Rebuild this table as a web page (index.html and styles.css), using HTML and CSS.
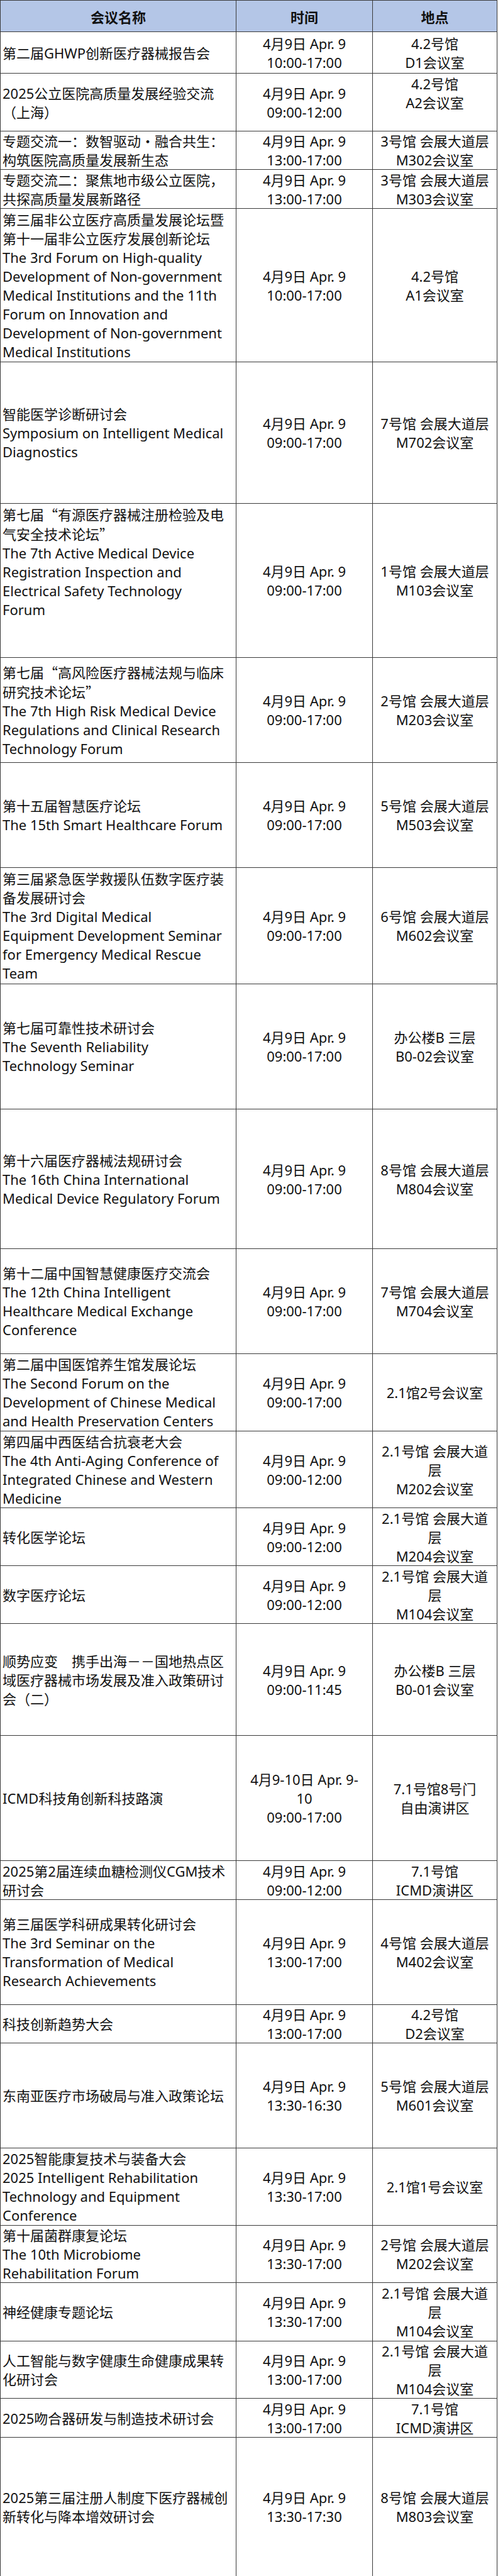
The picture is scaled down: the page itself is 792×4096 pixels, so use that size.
FILE: index.html
```html
<!DOCTYPE html>
<html lang="zh-CN">
<head>
<meta charset="utf-8">
<title>会议日程</title>
<link rel="stylesheet" href="styles.css">
</head>
<body>
<table class="schedule">
  <colgroup>
    <col class="c-name">
    <col class="c-time">
    <col class="c-place">
  </colgroup>
  <thead>
    <tr style="height:50px"><th>会议名称</th><th>时间</th><th>地点</th></tr>
  </thead>
  <tbody>
    <tr style="height:66px">
      <td class="name">第二届GHWP创新医疗器械报告会</td>
      <td class="time">4月9日 Apr. 9<br>10:00-17:00</td>
      <td class="place">4.2号馆<br>D1会议室</td>
    </tr>
    <tr style="height:92px">
      <td class="name">2025公立医院高质量发展经验交流<br>（上海）</td>
      <td class="time">4月9日 Apr. 9<br>09:00-12:00</td>
      <td class="place">4.2号馆<br>A2会议室<br>&nbsp;</td>
    </tr>
    <tr style="height:61px">
      <td class="name">专题交流一：数智驱动・融合共生：<br>构筑医院高质量发展新生态</td>
      <td class="time">4月9日 Apr. 9<br>13:00-17:00</td>
      <td class="place">3号馆 会展大道层<br>M302会议室</td>
    </tr>
    <tr style="height:62px">
      <td class="name">专题交流二：聚焦地市级公立医院，<br>共探高质量发展新路径</td>
      <td class="time">4月9日 Apr. 9<br>13:00-17:00</td>
      <td class="place">3号馆 会展大道层<br>M303会议室</td>
    </tr>
    <tr style="height:244px">
      <td class="name">第三届非公立医疗高质量发展论坛暨<br>第十一届非公立医疗发展创新论坛<br>The 3rd Forum on High-quality<br>Development of Non-government<br>Medical Institutions and the 11th<br>Forum on Innovation and<br>Development of Non-government<br>Medical Institutions</td>
      <td class="time">4月9日 Apr. 9<br>10:00-17:00</td>
      <td class="place">4.2号馆<br>A1会议室</td>
    </tr>
    <tr style="height:225px">
      <td class="name">智能医学诊断研讨会<br>Symposium on Intelligent Medical<br>Diagnostics</td>
      <td class="time">4月9日 Apr. 9<br>09:00-17:00</td>
      <td class="place">7号馆 会展大道层<br>M702会议室</td>
    </tr>
    <tr style="height:245px">
      <td class="name">第七届<span class="q">“</span>有源医疗器械注册检验及电<br>气安全技术论坛<span class="q">”</span><br>The 7th Active Medical Device<br>Registration Inspection and<br>Electrical Safety Technology<br>Forum<br>&nbsp;<br>&nbsp;</td>
      <td class="time">4月9日 Apr. 9<br>09:00-17:00</td>
      <td class="place">1号馆 会展大道层<br>M103会议室</td>
    </tr>
    <tr style="height:167px">
      <td class="name">第七届<span class="q">“</span>高风险医疗器械法规与临床<br>研究技术论坛<span class="q">”</span><br>The 7th High Risk Medical Device<br>Regulations and Clinical Research<br>Technology Forum</td>
      <td class="time">4月9日 Apr. 9<br>09:00-17:00</td>
      <td class="place">2号馆 会展大道层<br>M203会议室</td>
    </tr>
    <tr style="height:167px">
      <td class="name">第十五届智慧医疗论坛<br>The 15th Smart Healthcare Forum</td>
      <td class="time">4月9日 Apr. 9<br>09:00-17:00</td>
      <td class="place">5号馆 会展大道层<br>M503会议室</td>
    </tr>
    <tr style="height:185px">
      <td class="name">第三届紧急医学救援队伍数字医疗装<br>备发展研讨会<br>The 3rd Digital Medical<br>Equipment Development Seminar<br>for Emergency Medical Rescue<br>Team</td>
      <td class="time">4月9日 Apr. 9<br>09:00-17:00</td>
      <td class="place">6号馆 会展大道层<br>M602会议室</td>
    </tr>
    <tr style="height:199px">
      <td class="name">第七届可靠性技术研讨会<br>The Seventh Reliability<br>Technology Seminar</td>
      <td class="time">4月9日 Apr. 9<br>09:00-17:00</td>
      <td class="place">办公楼B 三层<br>B0-02会议室</td>
    </tr>
    <tr style="height:222px">
      <td class="name">第十六届医疗器械法规研讨会<br>The 16th China International<br>Medical Device Regulatory Forum</td>
      <td class="time">4月9日 Apr. 9<br>09:00-17:00</td>
      <td class="place">8号馆 会展大道层<br>M804会议室</td>
    </tr>
    <tr style="height:167px">
      <td class="name">第十二届中国智慧健康医疗交流会<br>The 12th China Intelligent<br>Healthcare Medical Exchange<br>Conference</td>
      <td class="time">4月9日 Apr. 9<br>09:00-17:00</td>
      <td class="place">7号馆 会展大道层<br>M704会议室</td>
    </tr>
    <tr style="height:123px">
      <td class="name">第二届中国医馆养生馆发展论坛<br>The Second Forum on the<br>Development of Chinese Medical<br>and Health Preservation Centers</td>
      <td class="time">4月9日 Apr. 9<br>09:00-17:00</td>
      <td class="place">2.1馆2号会议室</td>
    </tr>
    <tr style="height:122px">
      <td class="name">第四届中西医结合抗衰老大会<br>The 4th Anti-Aging Conference of<br>Integrated Chinese and Western<br>Medicine</td>
      <td class="time">4月9日 Apr. 9<br>09:00-12:00</td>
      <td class="place">2.1号馆 会展大道<br>层<br>M202会议室</td>
    </tr>
    <tr style="height:92px">
      <td class="name">转化医学论坛</td>
      <td class="time">4月9日 Apr. 9<br>09:00-12:00</td>
      <td class="place">2.1号馆 会展大道<br>层<br>M204会议室</td>
    </tr>
    <tr style="height:92px">
      <td class="name">数字医疗论坛</td>
      <td class="time">4月9日 Apr. 9<br>09:00-12:00</td>
      <td class="place">2.1号馆 会展大道<br>层<br>M104会议室</td>
    </tr>
    <tr style="height:178px">
      <td class="name">顺势应变　携手出海－－国地热点区<br>域医疗器械市场发展及准入政策研讨<br>会（二）</td>
      <td class="time">4月9日 Apr. 9<br>09:00-11:45</td>
      <td class="place">办公楼B 三层<br>B0-01会议室</td>
    </tr>
    <tr style="height:199px">
      <td class="name">ICMD科技角创新科技路演</td>
      <td class="time">4月9-10日 Apr. 9-<br>10<br>09:00-17:00</td>
      <td class="place">7.1号馆8号门<br>自由演讲区</td>
    </tr>
    <tr style="height:62px">
      <td class="name">2025第2届连续血糖检测仪CGM技术<br>研讨会</td>
      <td class="time">4月9日 Apr. 9<br>09:00-12:00</td>
      <td class="place">7.1号馆<br>ICMD演讲区</td>
    </tr>
    <tr style="height:167px">
      <td class="name">第三届医学科研成果转化研讨会<br>The 3rd Seminar on the<br>Transformation of Medical<br>Research Achievements</td>
      <td class="time">4月9日 Apr. 9<br>13:00-17:00</td>
      <td class="place">4号馆 会展大道层<br>M402会议室</td>
    </tr>
    <tr style="height:61px">
      <td class="name">科技创新趋势大会</td>
      <td class="time">4月9日 Apr. 9<br>13:00-17:00</td>
      <td class="place">4.2号馆<br>D2会议室</td>
    </tr>
    <tr style="height:167px">
      <td class="name">东南亚医疗市场破局与准入政策论坛</td>
      <td class="time">4月9日 Apr. 9<br>13:30-16:30</td>
      <td class="place">5号馆 会展大道层<br>M601会议室</td>
    </tr>
    <tr style="height:123px">
      <td class="name">2025智能康复技术与装备大会<br>2025 Intelligent Rehabilitation<br>Technology and Equipment<br>Conference</td>
      <td class="time">4月9日 Apr. 9<br>13:30-17:00</td>
      <td class="place">2.1馆1号会议室</td>
    </tr>
    <tr style="height:91px">
      <td class="name">第十届菌群康复论坛<br>The 10th Microbiome<br>Rehabilitation Forum</td>
      <td class="time">4月9日 Apr. 9<br>13:30-17:00</td>
      <td class="place">2号馆 会展大道层<br>M202会议室</td>
    </tr>
    <tr style="height:93px">
      <td class="name">神经健康专题论坛</td>
      <td class="time">4月9日 Apr. 9<br>13:30-17:00</td>
      <td class="place">2.1号馆 会展大道<br>层<br>M104会议室</td>
    </tr>
    <tr style="height:91px">
      <td class="name">人工智能与数字健康生命健康成果转<br>化研讨会</td>
      <td class="time">4月9日 Apr. 9<br>13:00-17:00</td>
      <td class="place">2.1号馆 会展大道<br>层<br>M104会议室</td>
    </tr>
    <tr style="height:62px">
      <td class="name">2025吻合器研发与制造技术研讨会</td>
      <td class="time">4月9日 Apr. 9<br>13:00-17:00</td>
      <td class="place">7.1号馆<br>ICMD演讲区</td>
    </tr>
    <tr style="height:221px">
      <td class="name">2025第三届注册人制度下医疗器械创<br>新转化与降本增效研讨会</td>
      <td class="time">4月9日 Apr. 9<br>13:30-17:30</td>
      <td class="place">8号馆 会展大道层<br>M803会议室</td>
    </tr>
  </tbody>
</table>
</body>
</html>
```

FILE: styles.css
```css
html, body {
  margin: 0;
  padding: 0;
  background: #ffffff;
}

.schedule {
  border-collapse: collapse;
  table-layout: fixed;
  width: 790px;
  font-family: "Noto Sans", "Noto Sans CJK SC", sans-serif;
  font-size: 22px;
  line-height: 30px;
  color: #111111;
}

.c-name { width: 375px; }
.c-time { width: 217px; }
.c-place { width: 198px; }

.schedule th,
.schedule td {
  border: 1px solid #3a3a3a;
  padding: 0 3px;
  vertical-align: middle;
  white-space: nowrap;
}

.schedule th {
  background: #b4c6e7;
  font-weight: 700;
  text-align: center;
  font-family: "Noto Sans CJK SC", sans-serif;
}

.schedule td.name {
  text-align: left;
}

.schedule td.time,
.schedule td.place {
  text-align: center;
}

.q {
  font-family: "Noto Sans CJK SC", sans-serif;
  font-feature-settings: "fwid" 1;
}
```
